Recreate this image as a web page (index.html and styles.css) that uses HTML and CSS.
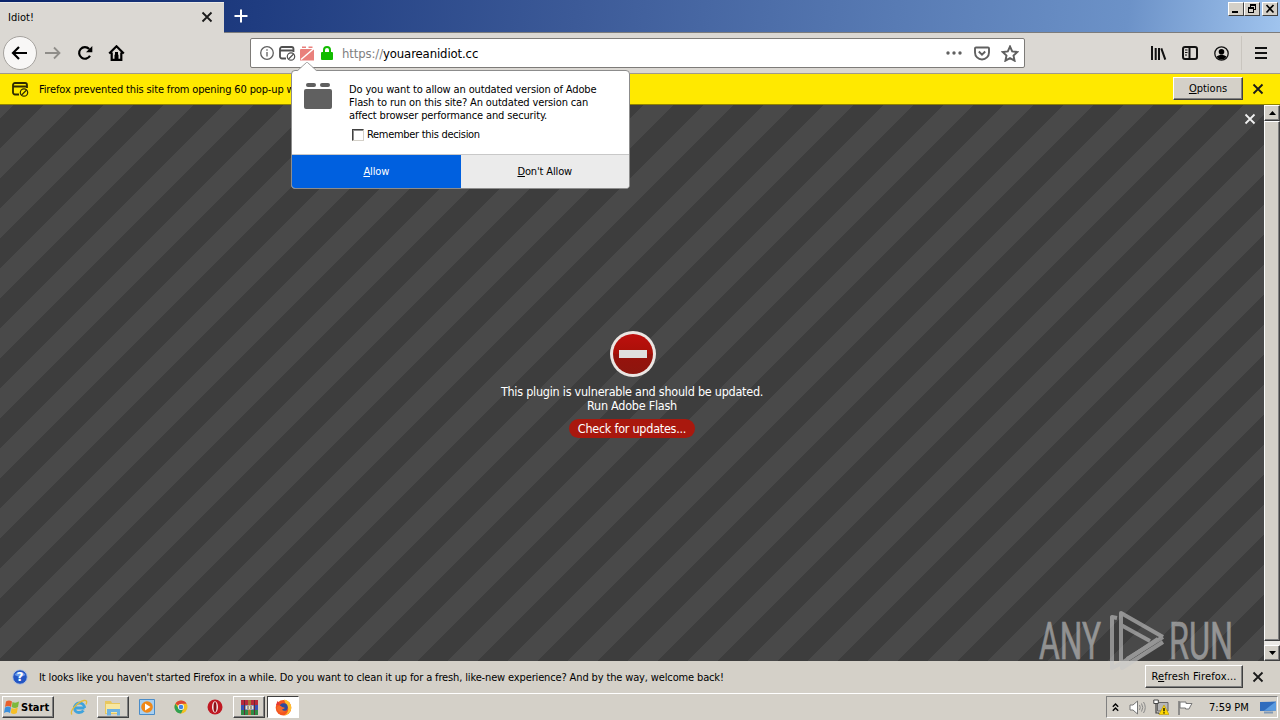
FILE: index.html
```
<!DOCTYPE html>
<html lang="en">
<head>
  <meta charset="UTF-8" />
  <meta name="viewport" content="width=device-width, initial-scale=1" />
  <title>Idiot!</title>
  <link rel="stylesheet" href="styles.css">
</head>
<body>
  <!-- Tabs -->
  <div class="tabstrip">
    <div class="tab">
      <span class="tab-title">Idiot!</span>
      <svg class="close" width="12" height="12" viewBox="0 0 12 12"><path d="M1.5 1.5l9 9M10.5 1.5l-9 9" /></svg>
    </div>
    <svg class="new-tab" width="16" height="16" viewBox="0 0 16 16"><path d="M8 1.5v13M1.5 8h13" /></svg>
    <div class="window-buttons">
      <span class="win-btn"><svg width="14" height="12" viewBox="0 0 14 12"><path d="M3 8h6v2H3z" /></svg></span>
      <span class="win-btn"><svg width="14" height="12" viewBox="0 0 14 12"><path d="M5 1h6v6H9V6h1V3H6v1H5zM3 4h6v6H3zM4 6v3h4V6z" fill-rule="evenodd" /></svg></span>
      <span class="win-btn last"><svg width="14" height="12" viewBox="0 0 14 12"><path d="M3.500 2l7 7.500M10.500 2l-7 7.500" stroke="#000" stroke-width="1.700" /></svg></span>
    </div>
  </div>

  <!-- Toolbar -->
  <div class="toolbar">
    <div class="back"><svg width="18" height="16" viewBox="0 0 18 16"><path d="M2 8h14M8 2L2 8l6 6" /></svg></div>
    <svg class="forward" width="18" height="16" viewBox="0 0 18 16"><path d="M1 8h14.5M10 2.5L15.5 8 10 13.5" /></svg>
    <svg class="reload" width="16" height="16" viewBox="0 0 16 16"><path d="M13 10.8A5.8 5.8 0 1 1 12.2 4" class="arc" /><path d="M15.3 1v6.3H9z" /></svg>
    <svg class="home" width="17" height="16" viewBox="0 0 17 16"><path d="M1.2 8.5L8.5 1.3l7.3 7.2M3.7 7.5V14.8h9.6V7.5" class="line" /><path d="M6.5 15v-4.500a2 2 0 0 1 4 0V15z" /><path d="M7 7h3v2H7z" /></svg>

    <div class="urlbar">
      <svg class="info" width="14" height="14" viewBox="0 0 14 14"><circle cx="7" cy="7" r="6.3" /><path d="M7 6v4.5M7 3.2v1.6" /></svg>
      <svg class="blocked" width="17" height="16" viewBox="0 0 17 16"><path d="M7 13.500H3a2 2 0 0 1-2-2V4a2 2 0 0 1 2-2h9.500a2 2 0 0 1 2 2v3M1 5.500h13.500" /><g class="ring"><circle cx="12" cy="11.5" r="3.7" /><path d="M9.6 14l5-5" /></g></svg>
      <svg class="plugin" width="15" height="15" viewBox="0 0 15 15"><path d="M1 3h12a1 1 0 0 1 1 1v10.500H0V4a1 1 0 0 1 1-1zM2 .5h4v1.500H2zM8.500 .5h4v1.500h-4z" /><path d="M1 13.5L14.500 2" class="slash" /></svg>
      <svg class="lock" width="12" height="14" viewBox="0 0 12 14"><path d="M3 7V4a3 3 0 0 1 6 0v3" class="shackle" /><rect y="6" width="12" height="8" rx="1" /></svg>
      <span class="url"><i>https://</i>youareanidiot.cc</span>
      <svg class="dots" width="18" height="6" viewBox="0 0 18 6"><circle cx="3" cy="3" r="1.7" /><circle cx="9" cy="3" r="1.7" /><circle cx="15" cy="3" r="1.7" /></svg>
      <svg class="pocket" width="16" height="15" viewBox="0 0 16 15"><path d="M2 1.5h12a1 1 0 0 1 1 1V6.500a7 7 0 0 1-14 0V2.500a1 1 0 0 1 1-1zM4.800 5.500L8 8.700l3.200-3.200" /></svg>
      <svg class="star" width="18" height="17" viewBox="0 0 18 17"><path d="M9 1.5l2.200 4.900 5.200.6-3.900 3.500 1.100 5.200L9 13.100l-4.600 2.600 1.100-5.200L1.600 7l5.200-.6z" /></svg>
    </div>

    <div class="tools">
      <svg class="library" width="17" height="16" viewBox="0 0 17 16"><path d="M2 1v14M5.700 3v12M9 3v12M11.300 3.300l4 11.400" /></svg>
      <svg class="sidebar" width="16" height="14" viewBox="0 0 16 14"><rect x="1" y="1" width="14" height="12" rx="2" /><path d="M7.500 1v12" /><path d="M3 4h2.500M3 6.500h2.500M3 9h2" class="thin" /></svg>
      <svg class="account" width="15" height="15" viewBox="0 0 15 15"><circle cx="7.500" cy="7.500" r="6.700" class="ring" /><circle cx="7.500" cy="5.800" r="2.800" /><path d="M2.500 10.500q5-3.300 10 0a5.700 5.700 0 0 1-10 0z" /></svg>
      <span class="separator"></span>
      <svg class="menu" width="12" height="12" viewBox="0 0 12 12"><path d="M0 1h12M0 6h12M0 11h12" /></svg>
    </div>
  </div>

  <!-- Pop-up blocker bar -->
  <div class="popup-bar">
    <svg class="blocked" width="17" height="16" viewBox="0 0 17 16"><path d="M7 13.500H3a2 2 0 0 1-2-2V4a2 2 0 0 1 2-2h10a2 2 0 0 1 2 2v3M1 5.500h14" /><g class="ring"><circle cx="12" cy="11.500" r="3.700" /><path d="M9.600 14l5-5" /></g></svg>
    <span class="text">Firefox prevented this site from opening 60 pop-up windows.</span>
    <button class="classic options"><u>O</u>ptions</button>
    <svg class="close" width="12" height="12" viewBox="0 0 12 12"><path d="M1.500 1.500l9 9M10.500 1.500l-9 9" /></svg>
  </div>

  <!-- Page -->
  <div class="page">
    <div class="plugin-area">
      <svg class="close plugin-close" width="12" height="12" viewBox="0 0 12 12"><path d="M1.500 1.500l9 9M10.500 1.500l-9 9" /></svg>
      <div class="plugin-message">
        <svg width="46" height="46" viewBox="0 0 46 46">
          <defs>
            <linearGradient id="red" x2="0" y2="1"><stop stop-color="#bd100e" /><stop offset=".5" stop-color="#a91008" /><stop offset=".51" stop-color="#97120c" /><stop offset="1" stop-color="#8d160e" /></linearGradient>
          </defs>
          <circle cx="23" cy="23" r="23" fill="#ebe6e3" />
          <circle cx="23" cy="23" r="20" fill="url(#red)" />
          <path d="M9 19h28v8H9z" fill="#dfdfdf" />
        </svg>
        <p class="vulnerable">This plugin is vulnerable and should be updated.</p>
        <p class="run">Run Adobe Flash</p>
        <span class="updates">Check for updates...</span>
      </div>
    </div>
    <div class="scrollbar">
      <span class="arrow"><svg width="7" height="4" viewBox="0 0 7 4"><path d="M0 4l3.500-4L7 4z" /></svg></span>
      <span class="thumb"></span>
      <span class="arrow"><svg width="7" height="4" viewBox="0 0 7 4"><path d="M0 0l3.500 4L7 0z" /></svg></span>
    </div>
  </div>

  <!-- Refresh bar -->
  <div class="refresh-bar">
    <svg class="help" width="16" height="16" viewBox="0 0 16 16"><circle cx="8" cy="8" r="7.300" fill="#2456c4" stroke="#b9c6dc" /><path d="M2.500 6a6 5 0 0 1 11 0q-5 3-11 0z" fill="#6d9cea" /><text x="8" y="12.200" text-anchor="middle">?</text></svg>
    <span class="text">It looks like you haven't started Firefox in a while. Do you want to clean it up for a fresh, like-new experience? And by the way, welcome back!</span>
    <button class="classic refresh">R<u>e</u>fresh Firefox...</button>
    <svg class="close" width="12" height="12" viewBox="0 0 12 12"><path d="M1.500 1.500l9 9M10.500 1.500l-9 9" /></svg>
  </div>

  <!-- Taskbar -->
  <div class="taskbar">
    <div class="start">
      <svg width="16" height="15" viewBox="0 0 16 15"><path d="M2 1.500q3-2 6 0L7 7q-3-2-6 0z" fill="#e8602c" /><path d="M8.500 2q3 1.500 6.500-.5l-1 5.500q-3 2-6.300 0z" fill="#7db93c" /><path d="M1 7.500q3-2 6 0l-1 5.500q-3-2-6 0z" fill="#3b8fdc" /><path d="M7.500 8q3 1.500 6.300-.5l-1 5.500q-3 2-6 0z" fill="#f6bf27" /></svg>
      <span>Start</span>
    </div>
    <div class="tasks">
      <span class="task">
        <svg width="18" height="17" viewBox="0 0 18 17"><path d="M14.500 9H4.500q.3 4.500 4.500 4.500 3 0 4.500-2" fill="none" stroke="#3fa3dc" stroke-width="2.800" /><path d="M4.500 9a5 5 0 0 1 10 0" fill="none" stroke="#3fa3dc" stroke-width="2.800" /><path d="M2 15.500C-1 12 8 3 14 1.500q4-.5 2 4" fill="none" stroke="#e3bb3a" stroke-width="1.300" /></svg>
      </span>
      <span class="task open">
        <svg width="18" height="17" viewBox="0 0 18 17"><path d="M1 2h6l1 2h8v11H1z" fill="#e8c75f" /><path d="M2 5h14v9H2z" fill="#f7e7a0" /><path d="M3 10h13v6.500h-3V13H7v3.500H3z" fill="#6eb2e2" /></svg>
      </span>
      <span class="task">
        <svg width="16" height="16" viewBox="0 0 16 16"><path d="M.5.5h15v15H.500z" fill="#a8cff0" stroke="#4a8cc8" /><circle cx="8" cy="8" r="5.800" fill="#f08818" /><path d="M6 4.500v7L11.500 8z" fill="#fff" /></svg>
      </span>
      <span class="task">
        <svg width="14" height="14" viewBox="0 0 14 14"><circle cx="7" cy="7" r="6.500" fill="#f3c022" /><path d="M7 7L1.400 3.700A6.500 6.500 0 0 1 12.600 3.700H7z" fill="#dd4534" /><path d="M1.400 3.700A6.500 6.500 0 0 0 7 13.500L9.500 8.500 4.500 8.500z" fill="#30a052" /><circle cx="7" cy="7" r="3" fill="#fff" /><circle cx="7" cy="7" r="2.300" fill="#4285e4" /></svg>
      </span>
      <span class="task">
        <svg width="16" height="16" viewBox="0 0 16 16"><circle cx="8" cy="8" r="7.500" fill="#c01822" /><ellipse cx="8" cy="8" rx="3" ry="5.800" fill="#f4eaea" /><ellipse cx="8" cy="8" rx="1.500" ry="5" fill="#8e1017" /></svg>
      </span>
      <span class="task open">
        <svg width="17" height="17" viewBox="0 0 17 17"><path d="M0 1h17v5H0z" fill="#b82a3c" /><path d="M0 6h17v5H0z" fill="#3654b8" /><path d="M0 11h17v5H0z" fill="#2e8b45" /><path d="M3.500 1v15M13.500 1v15" stroke="#652a38" /><path d="M7 1h3v15H7z" fill="#a87538" /><path d="M4.500 6.500h8v4h-8z" fill="#e9e4d0" /><path d="M7 7v3M10 7v3" stroke="#555" /></svg>
      </span>
      <span class="task active">
        <svg width="17" height="17" viewBox="0 0 17 17"><circle cx="8.500" cy="8.700" r="7.800" fill="#f4551e" /><path d="M9 .5c5 1 7.500 4.500 7.200 9-.5 4-3.500 6.500-7 7 5-3 5-8 2-10.500z" fill="#ffc02c" /><path d="M1 6l1.500-4 2 2.500q3-.5 4.500 1z" fill="#e33838" /><circle cx="8.700" cy="8.300" r="4" fill="#2d4c9d" /><path d="M2 8q3-2.500 5 0 3 0 2.500 1.500l-2.500 1q1 2 4 1-2.500 3-6 1.500T2 8z" fill="#f4682a" /></svg>
      </span>
    </div>
    <div class="tray">
      <svg width="7" height="9" viewBox="0 0 7 9"><path d="M.8 3.800l2.700-2.700 2.700 2.700M.8 7.800l2.700-2.700 2.700 2.700" fill="none" stroke="#000" stroke-width="1.400" /></svg>
      <svg class="speaker" width="17" height="15" viewBox="0 0 17 15"><path d="M1 5h3l4.500-4v13L4 10H1z" fill="#fff" stroke="#777" /><path d="M10.500 5q1.500 2.500 0 5M12.500 3.500q2.500 4 0 8M14.500 2q3.500 5.500 0 11" fill="none" stroke="#888" /></svg>
      <svg class="network" width="16" height="16" viewBox="0 0 16 16"><path d="M4.500 3.500h10.500v8.500H4.500z" fill="#b7b7b7" stroke="#666" /><path d="M5 14.500h7" stroke="#777" /><path d="M.8 1h4.500v3.500H.8z" fill="#fff" stroke="#444" /><path d="M3 5v9h3" fill="none" stroke="#444" stroke-width="1.200" /><path d="M11 6l5 9.500H6z" fill="#ffd800" stroke="#b79500" stroke-width=".6" /><path d="M11 9v3.200M11 13.200v1.300" stroke="#000" stroke-width="1.300" /></svg>
      <svg class="flag" width="17" height="15" viewBox="0 0 17 15"><path d="M2 1v14" stroke="#777" stroke-width="1.500" /><path d="M3 2h6v1.500h6L13.500 6l-1.500 3H8.500V8H3z" fill="#fff" stroke="#777" /></svg>
      <span class="clock">7:59 PM</span>
      <svg class="desktop" width="16" height="13" viewBox="0 0 16 13"><path d="M0 1l16-.5V9.500L0 10z" fill="#2f6cbd" /><path d="M16 .5V9.500L4 9.700z" fill="#5a9be0" /><path d="M4 11.500h9" stroke="#8199b5" stroke-width="2" /></svg>
    </div>
  </div>

  <!-- Plugin permission doorhanger -->
  <div class="doorhanger">
    <svg class="notch" width="20" height="10" viewBox="0 0 20 10"><path d="M0 9.500L10 0l10 9.500z" fill="#fff" /><path d="M0 9L9.500.5h1L20 9" fill="none" stroke="#a0a0a0" /></svg>
    <div class="prompt">
      <svg class="brick" width="28" height="26" viewBox="0 0 28 26"><rect x="2" y="0" width="10" height="4" rx="2" /><rect x="16" y="0" width="10" height="4" rx="2" /><rect y="6" width="28" height="20" rx="2" /></svg>
      <div>
        <p>Do you want to allow an outdated version of Adobe<br />Flash to run on this site? An outdated version can<br />affect browser performance and security.</p>
        <div class="remember"><span class="checkbox"></span><span>Remember this decision</span></div>
      </div>
    </div>
    <div class="choices">
      <div class="allow"><span><u>A</u>llow</span></div>
      <div class="deny"><span><u>D</u>on't Allow</span></div>
    </div>
  </div>

  <!-- Watermark -->
  <svg class="watermark" width="220" height="72" viewBox="0 0 220 72">
    <text x="1" y="51" textLength="62" lengthAdjust="spacingAndGlyphs">ANY</text>
    <g class="mark">
      <path d="M79 10l-5-1v51l10-5 36-24" />
      <path d="M83 53V5l42 24" />
      <path d="M89 51l36-22M125 34L84 60v-6M83 17l29 16" />
    </g>
    <text x="131" y="51" textLength="64" lengthAdjust="spacingAndGlyphs">RUN</text>
  </svg>
</body>
</html>
```
FILE: styles.css
```
* {
  box-sizing: border-box;
}
body {
  margin: 0;
  width: 1280px;
  height: 720px;
  overflow: hidden;
  position: relative;
  display: flex;
  flex-direction: column;
  font-family: Tahoma, "DejaVu Sans Condensed", "DejaVu Sans", sans-serif;
  font-stretch: condensed;
  font-size: 11px;
  color: #000;
  background: #d4d0c8;
}
p {
  margin: 0;
}
svg {
  display: block;
  flex: none;
}
span {
  white-space: nowrap;
}
.close {
  fill: none;
  stroke: #1a1a1a;
  stroke-width: 1.8;
}

/* tabs */
.tabstrip {
  height: 33px;
  display: flex;
  align-items: flex-start;
  background: linear-gradient(97deg, #0a246a 0, #1f3c80 20%, #3c5a98 45%, #587bb4 70%, #6c92c8 88%, #a0c4ee 100%);
  border-bottom: 1px solid #7c7c7c;
}
.tab {
  width: 224px;
  height: 32px;
  margin: 2px 0 -1px;
  padding: 0 11px 0 8px;
  display: flex;
  align-items: center;
  justify-content: space-between;
  background: #dbd8d3;
  border-top: 1px solid #eceae6;
}
.tab-title {
  margin-top: -2px;
}
.tab .close {
  margin-top: -3px;
}
.new-tab {
  margin: 8px 0 0 9px;
  stroke: #fff;
  stroke-width: 2;
}
.window-buttons {
  display: flex;
  margin: 2px 2px 0 auto;
}
.win-btn {
  width: 16px;
  height: 14px;
  background: #d4d0c8;
  border: 1px solid;
  border-color: #fff #404040 #404040 #fff;
}
.win-btn.last {
  margin-left: 2px;
}

/* toolbar */
.toolbar {
  height: 41px;
  display: flex;
  align-items: center;
  background: #dbd8d3;
  border-bottom: 1px solid #a09a8e;
  padding-left: 3px;
}
.back {
  width: 34px;
  height: 34px;
  border: 1px solid #a5a29e;
  border-radius: 50%;
  background: #f8f7f6;
  display: flex;
  align-items: center;
  justify-content: center;
}
.back svg,
.forward {
  fill: none;
  stroke: #000;
  stroke-width: 2.2;
}
.forward {
  margin-left: 7px;
  stroke: #8f8d89;
  stroke-width: 1.8;
}
.reload {
  margin-left: 15px;
}
.reload .arc {
  fill: none;
  stroke: #000;
  stroke-width: 2.2;
}
.home {
  margin-left: 15px;
}
.home .line {
  fill: none;
  stroke: #000;
  stroke-width: 2.2;
}
.urlbar {
  width: 775px;
  height: 30px;
  margin-left: 125px;
  padding: 0 5px 0 9px;
  display: flex;
  align-items: center;
  background: #fff;
  border: 1px solid #7d7b78;
  border-radius: 2px;
}
.info {
  fill: none;
  stroke: #606060;
  stroke-width: 1.3;
}
.blocked {
  fill: none;
  stroke: #505050;
  stroke-width: 1.8;
}
.blocked .ring {
  stroke-width: 1.2;
}
.urlbar .blocked {
  margin-left: 5px;
}
.plugin {
  margin-left: 4px;
  fill: #e9807c;
}
.plugin .slash {
  stroke: #fff;
  stroke-width: 1.5;
}
.lock {
  margin-left: 6px;
  fill: #12bc00;
}
.lock .shackle {
  fill: none;
  stroke: #12bc00;
  stroke-width: 2;
}
.url {
  flex: 1;
  margin-left: 9px;
  font-size: 13px;
  letter-spacing: -0.12px;
}
.url i {
  font-style: normal;
  color: #808080;
}
.dots {
  fill: #606060;
}
.pocket,
.star {
  fill: none;
  stroke: #606060;
  stroke-width: 1.9;
}
.pocket {
  margin-left: 11px;
}
.star {
  margin-left: 11px;
}
.tools {
  flex: 1;
  display: flex;
  align-items: center;
  padding-left: 125px;
}
.library,
.menu {
  stroke: #111;
  stroke-width: 2;
}
.sidebar {
  margin-left: 15px;
  fill: none;
  stroke: #111;
  stroke-width: 2;
}
.sidebar .thin {
  stroke-width: 1;
}
.account {
  margin-left: 16px;
}
.account .ring {
  fill: none;
  stroke: #111;
  stroke-width: 1.3;
}
.separator {
  width: 1px;
  height: 34px;
  margin: 0 13px 0 12px;
  background: #c9c5bf;
}

/* yellow bar */
.popup-bar {
  height: 31px;
  display: flex;
  align-items: center;
  padding: 0 16px 0 12px;
  background: #ffe900;
  border-bottom: 1px solid #8f8200;
}
.popup-bar .blocked {
  stroke: #2e2a00;
}
.popup-bar .text,
.refresh-bar .text {
  flex: 1;
  margin-left: 10px;
  letter-spacing: -0.14px;
}
.classic {
  height: 23px;
  padding: 0;
  font: inherit;
  color: #000;
  background: #d4d0c8;
  border: 1px solid;
  border-color: #fff #404040 #404040 #fff;
  box-shadow: inset -1px -1px 0 #808080;
}
.options {
  width: 70px;
  margin: -2px 9px 0 0;
}

/* page with blocked plugin */
.page {
  height: 556px;
  display: flex;
}
.plugin-area {
  flex: 1;
  position: relative;
  display: flex;
  justify-content: center;
  background: repeating-linear-gradient(135deg, #494949 0, #494949 9.55px, #3d3d3d 9.55px, #3d3d3d 30.76px, #494949 30.76px, #494949 42.426px);
}
.plugin-close {
  position: absolute;
  top: 8px;
  right: 8px;
  stroke: #f0f0f0;
}
.plugin-message {
  margin-top: 226px;
  display: flex;
  flex-direction: column;
  align-items: center;
  color: #fff;
  font-size: 12.5px;
  letter-spacing: -0.25px;
  line-height: 14px;
  text-align: center;
}
.plugin-message svg {
  margin-left: 2px;
}
.vulnerable {
  margin-top: 8px;
}
.updates {
  margin-top: 6px;
  width: 126px;
  height: 19px;
  line-height: 19px;
  border-radius: 10px;
  background: #a9180e;
}
.scrollbar {
  width: 16px;
  display: flex;
  flex-direction: column;
  background: #ebe9e5;
}
.arrow {
  height: 16px;
  display: flex;
  align-items: center;
  justify-content: center;
}
.arrow,
.thumb {
  background: #d4d0c8;
  border: 1px solid;
  border-color: #fff #404040 #404040 #fff;
  box-shadow: inset -1px -1px 0 #808080;
}
.thumb {
  height: 520px;
  margin-bottom: 4px;
}

/* refresh bar */
.refresh-bar {
  height: 32px;
  display: flex;
  align-items: center;
  padding: 0 16px 0 12px;
}
.refresh-bar .text {
  margin-left: 11px;
}
.help text {
  font: bold 12px "DejaVu Sans", sans-serif;
  fill: #fff;
}
.refresh {
  width: 98px;
  margin: -2px 9px 0 0;
  letter-spacing: 0.14px;
}

/* taskbar */
.taskbar {
  height: 27px;
  display: flex;
  align-items: center;
  border-top: 1px solid #fff;
  padding: 0 2px;
}
.start {
  width: 52px;
  height: 22px;
  display: flex;
  align-items: center;
  gap: 1px;
  padding-left: 1px;
  border: 1px solid;
  border-color: #fff #404040 #404040 #fff;
  box-shadow: inset -1px -1px 0 #808080;
  font-weight: bold;
}
.tasks {
  display: flex;
  gap: 2px;
  margin-left: 9px;
}
.task {
  width: 32px;
  height: 22px;
  display: flex;
  align-items: center;
  justify-content: center;
  border: 1px solid transparent;
}
.task.open {
  border-color: #fff #404040 #404040 #fff;
  box-shadow: inset -1px -1px 0 #808080;
}
.task.active {
  background: #fff;
  border-color: #404040 #fff #fff #404040;
}
.tray {
  width: 172px;
  height: 22px;
  margin-left: auto;
  padding: 0 1px 0 5px;
  display: flex;
  align-items: center;
  border: 1px solid;
  border-color: #808080 #fff #fff #808080;
}
.speaker {
  margin-left: 10px;
}
.network {
  margin-left: 7px;
}
.flag {
  margin-left: 8px;
}
.clock {
  margin-left: 15px;
}
.desktop {
  margin-left: auto;
}

/* doorhanger */
.doorhanger {
  position: absolute;
  left: 291px;
  top: 70px;
  width: 339px;
  height: 119px;
  display: flex;
  flex-direction: column;
  background: #fff;
  border: 1px solid #8c8c8c;
  border-radius: 4px;
  letter-spacing: -0.14px;
}
.notch {
  position: absolute;
  left: 5px;
  top: -9px;
}
.prompt {
  flex: 1;
  display: flex;
  padding: 12px 0 0 12px;
  line-height: 13px;
}
.brick {
  fill: #606060;
  margin-right: 17px;
}
.remember {
  display: flex;
  align-items: center;
  gap: 3px;
  margin: 6px 0 0 3px;
  letter-spacing: -0.3px;
}
.checkbox {
  width: 12px;
  height: 12px;
  border: 1px solid;
  border-color: #404040 #d4d0c8 #d4d0c8 #404040;
  box-shadow: inset 1px 1px 0 #909090;
}
.choices {
  height: 34px;
  display: flex;
  border-top: 1px solid #c8c8c8;
}
.choices div {
  flex: 1;
  display: flex;
  align-items: center;
  justify-content: center;
}
.allow {
  background: #0060df;
  color: #fff;
  border-radius: 0 0 0 3px;
}
.deny {
  background: #ebebeb;
  border-radius: 0 0 3px 0;
}

/* watermark */
.watermark {
  position: absolute;
  left: 1038px;
  top: 608px;
  opacity: 0.6;
}
.watermark text {
  font: 51px Roboto, sans-serif;
  fill: #c8c8c8;
  stroke: #c8c8c8;
  stroke-width: 0.6;
}
.mark {
  fill: none;
  stroke: #c8c8c8;
  stroke-width: 4;
  stroke-linejoin: round;
}
```
